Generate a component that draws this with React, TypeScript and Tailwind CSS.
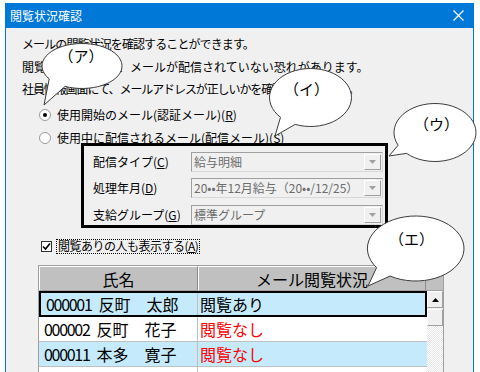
import React from "react";

type Bubble = {
  label: string;
  cx: number;
  cy: number;
  rx: number;
  ry: number;
  t1: number; // join angle near the tip, degrees
  t2: number;
  tip: [number, number];
  tx: number;
  ty: number;
};

const bubbles: Bubble[] = [
  { label: "（ア）", cx: 82, cy: 66, rx: 40, ry: 22.5, t1: 145, t2: 115, tip: [44, 105], tx: 81, ty: 62 },
  { label: "（イ）", cx: 310.5, cy: 97.5, rx: 41, ry: 29, t1: 137, t2: 112, tip: [275, 136], tx: 306.5, ty: 95 },
  { label: "（ウ）", cx: 435, cy: 132.5, rx: 41, ry: 29, t1: 154, t2: 134, tip: [389, 156], tx: 436.5, ty: 130 },
  { label: "（エ）", cx: 415.7, cy: 248.5, rx: 48.3, ry: 32.5, t1: 144, t2: 122, tip: [368, 286], tx: 411.5, ty: 245 },
];

function bubblePath(b: Bubble) {
  const pt = (deg: number) => {
    const r = (deg * Math.PI) / 180;
    return [b.cx + b.rx * Math.cos(r), b.cy + b.ry * Math.sin(r)];
  };
  const [x1, y1] = pt(b.t1);
  const [x2, y2] = pt(b.t2);
  return `M ${x1} ${y1} A ${b.rx} ${b.ry} 0 1 1 ${x2} ${y2} L ${b.tip[0]} ${b.tip[1]} Z`;
}

function Radio({ checked }: { checked?: boolean }) {
  return (
    <span className="w-[12px] h-[12px] rounded-full border border-[#9a9a9a] bg-white flex items-center justify-center shrink-0">
      {checked && <span className="w-[4px] h-[4px] rounded-full bg-black" />}
    </span>
  );
}

function Combo({ value }: { value: string }) {
  return (
    <div className="w-[192px] h-[20px] border border-t-[#a0a0a0] border-l-[#a0a0a0] border-b-[#d8d8d8] border-r-[#d8d8d8] bg-[#f0f0f0] flex items-center">
      <span className="flex-1 pl-[2px] text-[#6d6d6d] whitespace-nowrap">{value}</span>
      <span className="w-[17px] h-[16px] mr-px border border-t-white border-l-white border-b-[#a0a0a0] border-r-[#a0a0a0] bg-[#f0f0f0] flex items-center justify-center">
        <svg width="7" height="4" viewBox="0 0 7 4">
          <path d="M0 0 H7 L3.5 4 Z" fill="#a0a0a0" />
        </svg>
      </span>
    </div>
  );
}

const rows = [
  { id: "000001", name: "反町　太郎", status: "閲覧あり", read: true, bg: "bg-[#c4eafb]" },
  { id: "000002", name: "反町　花子", status: "閲覧なし", read: false, bg: "bg-white" },
  { id: "000011", name: "本多　寛子", status: "閲覧なし", read: false, bg: "bg-[#c4eafb]" },
  { id: "", name: "", status: "", read: true, bg: "bg-white" },
];

export default function App() {
  return (
    <div className="w-[480px] h-[372px] bg-white relative overflow-hidden font-['Noto_Sans_CJK_JP',sans-serif] text-[12px] text-black leading-none">
      <div className="ml-[5px] mt-[3px] w-[469px] h-[369px] flex flex-col border-x border-[#0078d7] bg-[#f0f0f0]">
        {/* title bar */}
        <div className="h-[25px] shrink-0 bg-[#0078d7] flex items-center justify-between pl-[4px] pr-[9px] text-white">
          <span>閲覧状況確認</span>
          <svg width="11" height="11" viewBox="0 0 11 11">
            <path d="M0.5 0.5 L10.5 10.5 M10.5 0.5 L0.5 10.5" stroke="#ffffff" strokeWidth="1.2" />
          </svg>
        </div>

        {/* intro text */}
        <div className="shrink-0 ml-[16px] mt-[6px] h-[20px] flex items-center tracking-[-0.9px]">メールの閲覧状況を確認することができます。</div>
        <div className="shrink-0 ml-[16px] mt-[3px] h-[20px] flex items-center">閲覧なしの場合は、メールが配信されていない恐れがあります。</div>
        <div className="shrink-0 ml-[16px] mt-[2px] h-[20px] flex items-center tracking-[-1.1px]">社員情報画面にて、メールアドレスが正しいかを確認してください。</div>

        {/* radios */}
        <div className="shrink-0 ml-[33px] mt-[6px] h-[20px] flex items-center gap-[6px]">
          <Radio checked />
          <span>
            使用開始のメール(認証メール)(<span className="underline">R</span>)
          </span>
        </div>
        <div className="shrink-0 ml-[33px] mt-[6px] h-[14px] flex items-center gap-[6px]">
          <Radio />
          <span>
            使用中に配信されるメール(配信メール)(<span className="underline">S</span>)
          </span>
        </div>

        {/* highlighted group */}
        <div className="shrink-0 ml-[75px] mt-[-2px] w-[307px] h-[85px] border-[3px] border-black flex flex-col pt-[6px] pl-[9px]">
          <div className="flex items-center h-[20px] shrink-0">
            <span className="w-[98px]">
              配信タイプ(<span className="underline">C</span>)
            </span>
            <Combo value="給与明細" />
          </div>
          <div className="flex items-center h-[20px] mt-[6px] shrink-0">
            <span className="w-[98px]">
              処理年月(<span className="underline">D</span>)
            </span>
            <Combo value="20••年12月給与（20••/12/25）" />
          </div>
          <div className="flex items-center h-[20px] mt-[7px] shrink-0">
            <span className="w-[98px]">
              支給グループ(<span className="underline">G</span>)
            </span>
            <Combo value="標準グループ" />
          </div>
        </div>

        {/* checkbox */}
        <div className="shrink-0 ml-[35px] mt-[10px] h-[16px] flex items-center gap-[4px]">
          <span className="w-[11px] h-[11px] border border-[#333333] bg-white flex items-center justify-center">
            <svg width="9" height="9" viewBox="0 0 9 9">
              <path d="M1 4.5 L3.5 7 L8 1.5" stroke="#000000" strokeWidth="1.6" fill="none" />
            </svg>
          </span>
          <span className="border border-dotted border-black px-px h-[15px] flex items-center tracking-[-0.5px]">
            閲覧ありの人も表示する(<span className="underline">A</span>)
          </span>
        </div>

        {/* list */}
        <div className="ml-[32px] mt-[11px] w-[406px] flex-1 min-h-0 border border-[#a0a0a0] bg-white flex flex-col text-[16px]">
          <div className="h-[25px] shrink-0 flex bg-[#c0c0c0]">
            <div className="w-[159px] border border-t-white border-l-white border-r-[#8c8c8c] border-b-[#a0a0a0] flex items-center justify-center">
              氏名
            </div>
            <div className="w-[228px] border border-t-white border-l-white border-r-[#8c8c8c] border-b-[#a0a0a0] flex items-center justify-center">
              メール閲覧状況
            </div>
            <div className="flex-1 border-b border-[#a0a0a0]" />
          </div>
          <div className="flex flex-1">
            <div className="w-[388px] flex flex-col">
              {rows.map((r, i) => (
                <div
                  key={i}
                  className={`flex shrink-0 ${r.bg} ${
                    i === 0 ? "h-[26px] border-2 border-black" : "h-[25px] border-b border-[#c0c0c0]"
                  }`}
                >
                  <div className={`${i === 0 ? "w-[157px]" : "w-[159px]"} border-r border-[#c0c0c0] flex items-center pl-[5px] whitespace-nowrap`}>
                    <span className="tracking-[-1.3px]">{r.id}</span>
                    {r.id && <span className="ml-[7px]">{r.name}</span>}
                  </div>
                  <div className={`flex-1 flex items-center pl-[2px] ${r.read ? "text-black" : "text-[#ff0000]"}`}>
                    {r.status}
                  </div>
                </div>
              ))}
            </div>
            <div className="w-[16px] flex flex-col bg-[repeating-conic-gradient(#e6e6e6_0%_25%,#ffffff_0%_50%)] [background-size:2px_2px]">
              <div className="h-[17px] shrink-0 border border-t-white border-l-white border-b-[#a0a0a0] border-r-[#a0a0a0] bg-[#f0f0f0] flex items-center justify-center">
                <svg width="7" height="4" viewBox="0 0 7 4">
                  <path d="M0 4 H7 L3.5 0 Z" fill="#000000" />
                </svg>
              </div>
              <div className="h-[17px] shrink-0 mt-px border border-t-white border-l-white border-b-[#a0a0a0] border-r-[#a0a0a0] bg-[#f0f0f0]" />
            </div>
          </div>
        </div>
      </div>

      {/* callout bubbles */}
      <svg className="absolute left-0 top-0 pointer-events-none" width="480" height="372" viewBox="0 0 480 372">
        {bubbles.map((b) => (
          <g key={b.label}>
            <path d={bubblePath(b)} fill="#ffffff" stroke="#3c3c3c" strokeWidth="1" />
            <text
              x={b.tx}
              y={b.ty}
              textAnchor="middle"
              fontSize="15"
              fontFamily="'Noto Sans CJK JP', sans-serif"
              fill="#000000"
            >
              {b.label}
            </text>
          </g>
        ))}
      </svg>
    </div>
  );
}
